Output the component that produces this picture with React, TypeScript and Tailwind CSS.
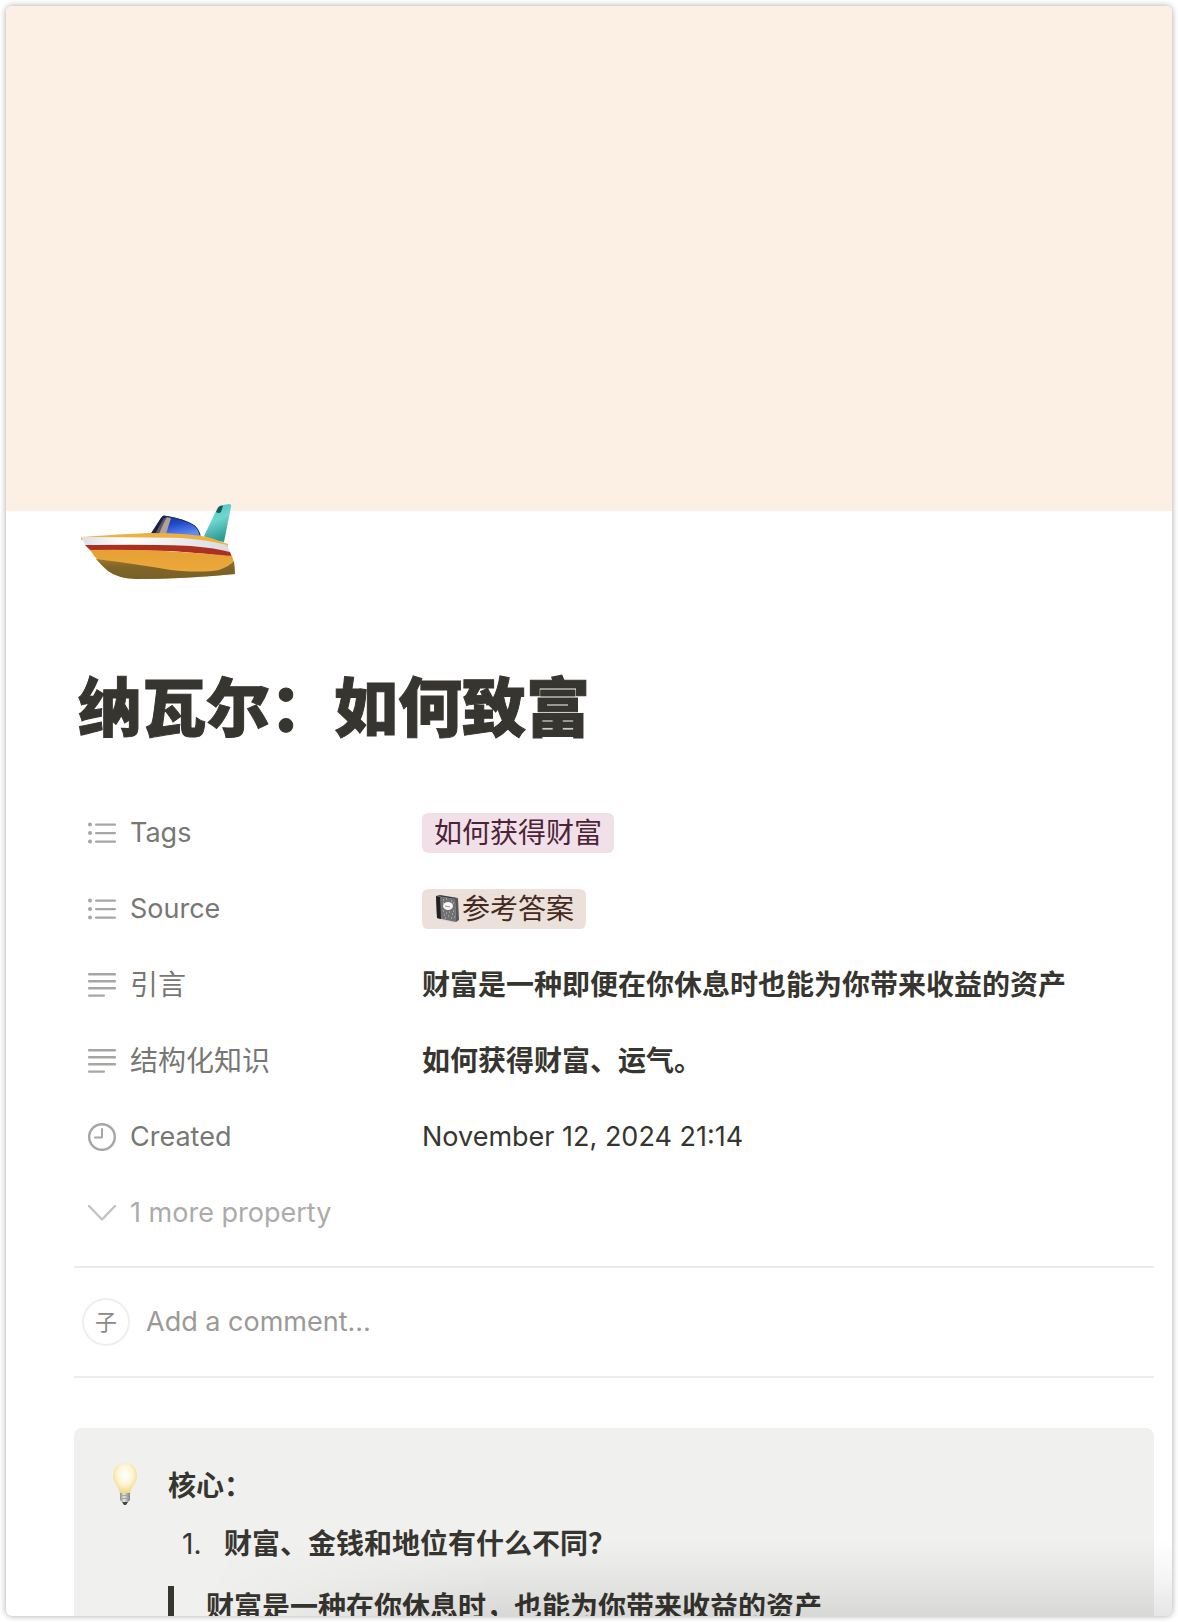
import type { ReactNode } from "react";

function Boat() {
  return (
    <svg width="156" height="76" viewBox="0 0 156 76" role="img" aria-label="Speedboat">
      <defs>
        <linearGradient id="fin" x1="0" y1="0" x2="0.3" y2="1">
          <stop offset="0" stopColor="#3fc4be" />
          <stop offset="0.5" stopColor="#6fd6d0" />
          <stop offset="1" stopColor="#2f9c94" />
        </linearGradient>
        <linearGradient id="glass" x1="0" y1="0" x2="0.5" y2="1">
          <stop offset="0" stopColor="#1a2f74" />
          <stop offset="0.5" stopColor="#2148cc" />
          <stop offset="1" stopColor="#5f8df0" />
        </linearGradient>
        <linearGradient id="hull" x1="0" y1="0" x2="0" y2="1">
          <stop offset="0" stopColor="#e6a035" />
          <stop offset="1" stopColor="#eeac3d" />
        </linearGradient>
        <linearGradient id="keel" x1="0" y1="0" x2="0" y2="1">
          <stop offset="0" stopColor="#9a7a2d" />
          <stop offset="0.4" stopColor="#806529" />
          <stop offset="1" stopColor="#776028" />
        </linearGradient>
        <linearGradient id="stripe" x1="0" y1="0" x2="1" y2="0">
          <stop offset="0" stopColor="#dcdfe6" />
          <stop offset="0.3" stopColor="#ffffff" />
          <stop offset="1" stopColor="#d8dae2" />
        </linearGradient>
      </defs>
      <path d="M123 32 L136 5 Q138 1 142 1 L148 0 Q151 0 150 3 L143 38 L128 36 Z" fill="url(#fin)" />
      <path d="M136 6 Q138 1 142 2 L140 8 Q138 10 135 8 Z" fill="#1c5a56" />
      <path d="M69 31 L80 14 Q82 11 86 12 Q104 15 114 22 Q119 27 120 33 L70 30 Z" fill="url(#glass)" />
      <path d="M76 30 L86 13 L90 14 L85 30 Z" fill="#b3a195" />
      <path d="M69 31 L80 14 Q82 11 85 12 L75 30 Z" fill="#1a2144" />
      <path d="M74 30 L83 14 L85 14 L78 30 Z" fill="#5d5a66" />
      <path d="M82 12 Q104 15 114 22 Q118 26 119 31" fill="none" stroke="#18305a" strokeWidth="1" />
      <path d="M0 33 Q40 30 68 29 Q110 29 130 34 L147 40 L147 43 L0 36 Z" fill="#efb040" />
      <path d="M0 33 Q60 33 100 34 Q128 36 146 41 L149 48 Q120 42 80 41 L5 42 Z" fill="url(#stripe)" />
      <path d="M4 41 Q80 40 110 42 Q135 44 149 48 L151 53 Q120 49 90 47 L9 46 Z" fill="#ac3020" />
      <path d="M9 46 Q60 45 100 48 Q130 50 151 52 Q154 60 154 70 Q105 75 55 75 Q36 74 27 67 Q17 58 9 46 Z" fill="url(#hull)" />
      <path d="M15 55 Q55 60 90 66 Q120 69 138 66 Q149 62 153 57 L154 70 Q105 75 55 75 Q36 74 27 67 Q20 61 15 55 Z" fill="url(#keel)" />
    </svg>
  );
}

function Bulb() {
  return (
    <svg width="26" height="42" viewBox="0 0 26 42" role="img" aria-label="Light bulb">
      <defs>
        <radialGradient id="bulb" cx="0.5" cy="0.38" r="0.6">
          <stop offset="0" stopColor="#fffefa" />
          <stop offset="0.5" stopColor="#fdf6dc" />
          <stop offset="1" stopColor="#f2d67c" />
        </radialGradient>
        <linearGradient id="cap" x1="0" y1="0" x2="1" y2="0">
          <stop offset="0" stopColor="#8d8d8d" />
          <stop offset="0.4" stopColor="#e8e8e8" />
          <stop offset="1" stopColor="#777777" />
        </linearGradient>
      </defs>
      <path d="M13 0 C20 0 25 5 25 13 C25 20 19 23 18 31 L8 31 C7 23 1 20 1 13 C1 5 6 0 13 0 Z" fill="url(#bulb)" />
      <path d="M8 30 H18 V37 L16 39 H10 L8 37 Z" fill="url(#cap)" />
      <path d="M8 33 L18 32 M8 36 L18 35" stroke="#a2a2a2" strokeWidth="1" />
      <path d="M10 39 H16 L14 42 H12 Z" fill="#444" />
    </svg>
  );
}

function Notebook() {
  return (
    <svg className="h-7 w-7 shrink-0" viewBox="0 0 28 28" aria-hidden="true">
      <path d="M2 1 L23 4 L24 25 L20 28 L3 24 Z" fill="#d9d9d9" />
      <path d="M2 1 L21 4 L22 27 L3 23 Z" fill="#6f7172" />
      <path d="M2 1 L6 2 L7 24 L3 23 Z" fill="#1f2123" />
      <path d="M21 4 L24 3 L25 25 L22 27 Z" fill="#55585a" />
      <path d="M2 1 L6 0 L24 3 L21 4 Z" fill="#3c3e40" />
      <path
        d="M9 5h1M12 4h1M17 6h1M9 16h1M12 18h1M15 17h1M18 19h1M10 20h1M14 21h1M19 16h1M17 23h1M11 23h1M20 22h1M9 8h1M19 8h1"
        stroke="#c9c9c9"
        strokeWidth="1"
      />
      <ellipse cx="14" cy="11" rx="5" ry="4" fill="#f6f6f6" />
      <path d="M11 11 L16 12" stroke="#999" strokeWidth="1" />
    </svg>
  );
}

function ListIcon() {
  return (
    <svg className="h-7 w-7" viewBox="0 0 28 28" fill="#a6a6a4" aria-hidden="true">
      <circle cx="2" cy="5.5" r="2" />
      <circle cx="2" cy="14" r="2" />
      <circle cx="2" cy="22.5" r="2" />
      <rect x="7" y="4.4" width="21" height="2.3" rx="1" />
      <rect x="7" y="12.9" width="21" height="2.3" rx="1" />
      <rect x="7" y="21.4" width="21" height="2.3" rx="1" />
    </svg>
  );
}

function TextIcon() {
  return (
    <svg className="h-7 w-7" viewBox="0 0 28 28" fill="#a6a6a4" aria-hidden="true">
      <rect x="0" y="2" width="28" height="2.4" rx="1" />
      <rect x="0" y="9" width="28" height="2.4" rx="1" />
      <rect x="0" y="16" width="28" height="2.4" rx="1" />
      <rect x="0" y="23.4" width="17" height="2.4" rx="1" />
    </svg>
  );
}

function ClockIcon() {
  return (
    <svg className="h-7 w-7" viewBox="0 0 28 28" fill="none" stroke="#a6a6a4" strokeLinecap="round" aria-hidden="true">
      <circle cx="14" cy="14" r="12.8" strokeWidth="2.4" />
      <path d="M14 6V14.6H7" strokeWidth="2" strokeLinejoin="round" />
    </svg>
  );
}

function ChevronIcon() {
  return (
    <svg className="h-7 w-7" viewBox="0 0 28 28" fill="none" stroke="#c3c2c0" aria-hidden="true">
      <path d="M1 7 L14 20.5 L27 7" strokeWidth="2.4" strokeLinecap="round" strokeLinejoin="round" />
    </svg>
  );
}

function Property({ icon, label, children }: { icon: ReactNode; label: ReactNode; children: ReactNode }) {
  return (
    <div className="flex h-[76px] items-center">
      <dt className="flex w-[334px] shrink-0 items-center gap-[14px] text-[#787774]">
        {icon}
        {label}
      </dt>
      <dd className="flex min-w-0 flex-1 items-center whitespace-nowrap">{children}</dd>
    </div>
  );
}

export default function App() {
  return (
    <div className="h-screen bg-white p-[6px] font-['Inter','Noto_Sans_CJK_SC',sans-serif] text-[27px] text-[#37352f]">
      <main className="relative flex h-full flex-col overflow-hidden rounded-md bg-white shadow-[0_0_6px_rgba(0,0,0,0.35)]">
        <div className="h-[505px] shrink-0 bg-[#fcf0e4]" />

        <div className="shrink-0 pr-[18px] pl-[68px]">
          <div className="relative -mt-[7px] ml-[7px]">
            <Boat />
          </div>

          <h1 className="mt-[80px] ml-1 text-[64px] leading-[96px] font-black [-webkit-text-stroke:1px_#37352f]">
            纳瓦尔：如何致富
          </h1>

          <dl className="mt-[39px] pl-[14px]">
            <Property icon={<ListIcon />} label="Tags">
              <span className="inline-flex h-10 items-center rounded-md bg-[#f2e0e8] px-3 text-[28px] text-[#4c2337]">
                如何获得财富
              </span>
            </Property>
            <Property icon={<ListIcon />} label="Source">
              <span className="inline-flex h-10 items-center rounded-md bg-[#ece0da] px-3 text-[28px] text-[#442a1e]">
                <Notebook />
                参考答案
              </span>
            </Property>
            <Property icon={<TextIcon />} label={<span className="text-[28px]">引言</span>}>
              <b className="text-[28px]">财富是一种即便在你休息时也能为你带来收益的资产</b>
            </Property>
            <Property icon={<TextIcon />} label={<span className="text-[28px]">结构化知识</span>}>
              <b className="text-[28px]">如何获得财富、运气。</b>
            </Property>
            <Property icon={<ClockIcon />} label="Created">
              November 12, 2024 21:14
            </Property>
          </dl>

          <button className="ml-[14px] flex h-[76px] items-center gap-[14px] text-[#acaba9]">
            <ChevronIcon />
            1 more property
          </button>

          <div className="mt-[15px] flex h-[112px] items-center gap-4 border-y-2 border-[#ededec] pl-2">
            <span className="flex h-12 w-12 shrink-0 items-center justify-center rounded-full border-2 border-[#efefee] text-[22px] text-[#8b8a87]">
              子
            </span>
            <input
              aria-label="Add a comment"
              placeholder="Add a comment…"
              className="w-full min-w-0 outline-none placeholder:text-[#9b9a97]"
            />
          </div>

          <section className="mt-[50px] flex gap-[30px] rounded-lg bg-[#f0f0ee] pt-[35px] pr-8 pb-8 pl-[38px] text-[28px]">
            <Bulb />
            <div className="min-w-0 flex-1">
              <p className="leading-[46px] font-bold">核心：</p>
              <ol className="mt-3 list-none">
                <li className="flex leading-[46px] font-bold">
                  <span className="w-[56px] pl-[14px] font-normal">1.</span>
                  财富、金钱和地位有什么不同？
                </li>
              </ol>
              <blockquote className="mt-[19px] border-l-[6px] border-[#37352f] pl-8 leading-[42px] font-bold">
                财富是一种在你休息时，也能为你带来收益的资产
              </blockquote>
            </div>
          </section>
        </div>

        <div className="pointer-events-none absolute right-0 bottom-0 left-[200px] h-[76px] bg-linear-to-t from-black/10 via-black/4 to-transparent mask-l-from-70%" />
      </main>
    </div>
  );
}
